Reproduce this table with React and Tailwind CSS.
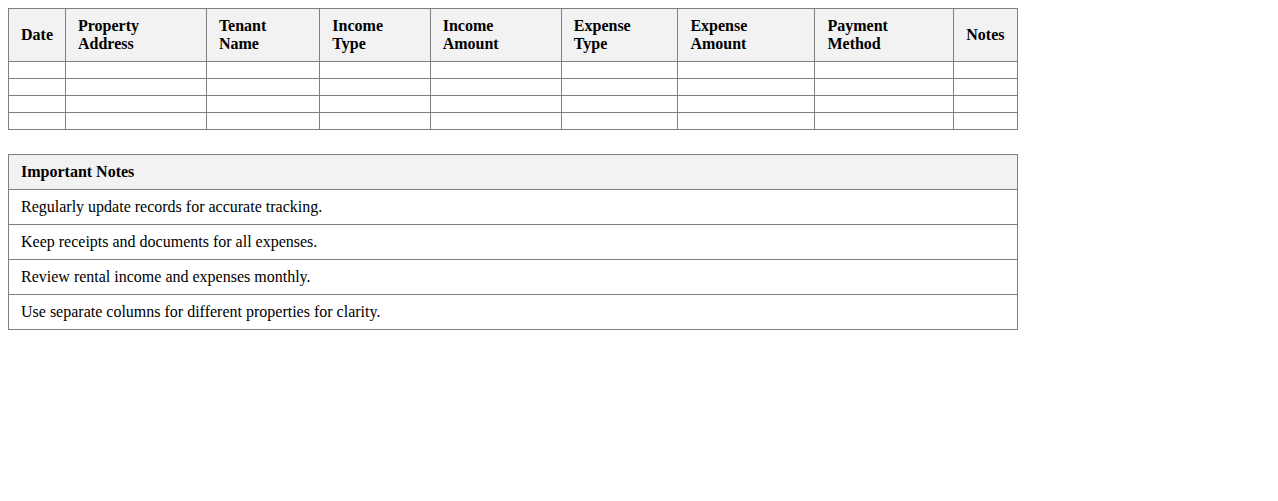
const columns = [
  'Date',
  'Property Address',
  'Tenant Name',
  'Income Type',
  'Income Amount',
  'Expense Type',
  'Expense Amount',
  'Payment Method',
  'Notes',
]

const notes = [
  'Regularly update records for accurate tracking.',
  'Keep receipts and documents for all expenses.',
  'Review rental income and expenses monthly.',
  'Use separate columns for different properties for clarity.',
]

export default function App() {
  return (
    <div className="p-2 bg-white text-black text-base leading-[18px] font-['Liberation_Serif','Times_New_Roman',serif]">
      <table className="w-[80%] border-collapse border border-[#808080]">
        <thead>
          <tr>
            {columns.map((c) => (
              <th key={c} className="border border-[#808080] bg-[#f2f2f2] px-3 py-2 text-left font-bold align-middle">
                {c}
              </th>
            ))}
          </tr>
        </thead>
        <tbody>
          {[1, 2, 3, 4].map((r) => (
            <tr key={r}>
              {columns.map((c) => (
                <td key={c} className="border border-[#808080] px-3 py-2" />
              ))}
            </tr>
          ))}
        </tbody>
      </table>

      <table className="w-[80%] mt-6 border-collapse border border-[#808080]">
        <thead>
          <tr>
            <th className="border border-[#808080] bg-[#f2f2f2] px-3 py-2 text-left font-bold">Important Notes</th>
          </tr>
        </thead>
        <tbody>
          {notes.map((n) => (
            <tr key={n}>
              <td className="border border-[#808080] px-3 py-2">{n}</td>
            </tr>
          ))}
        </tbody>
      </table>
    </div>
  )
}
